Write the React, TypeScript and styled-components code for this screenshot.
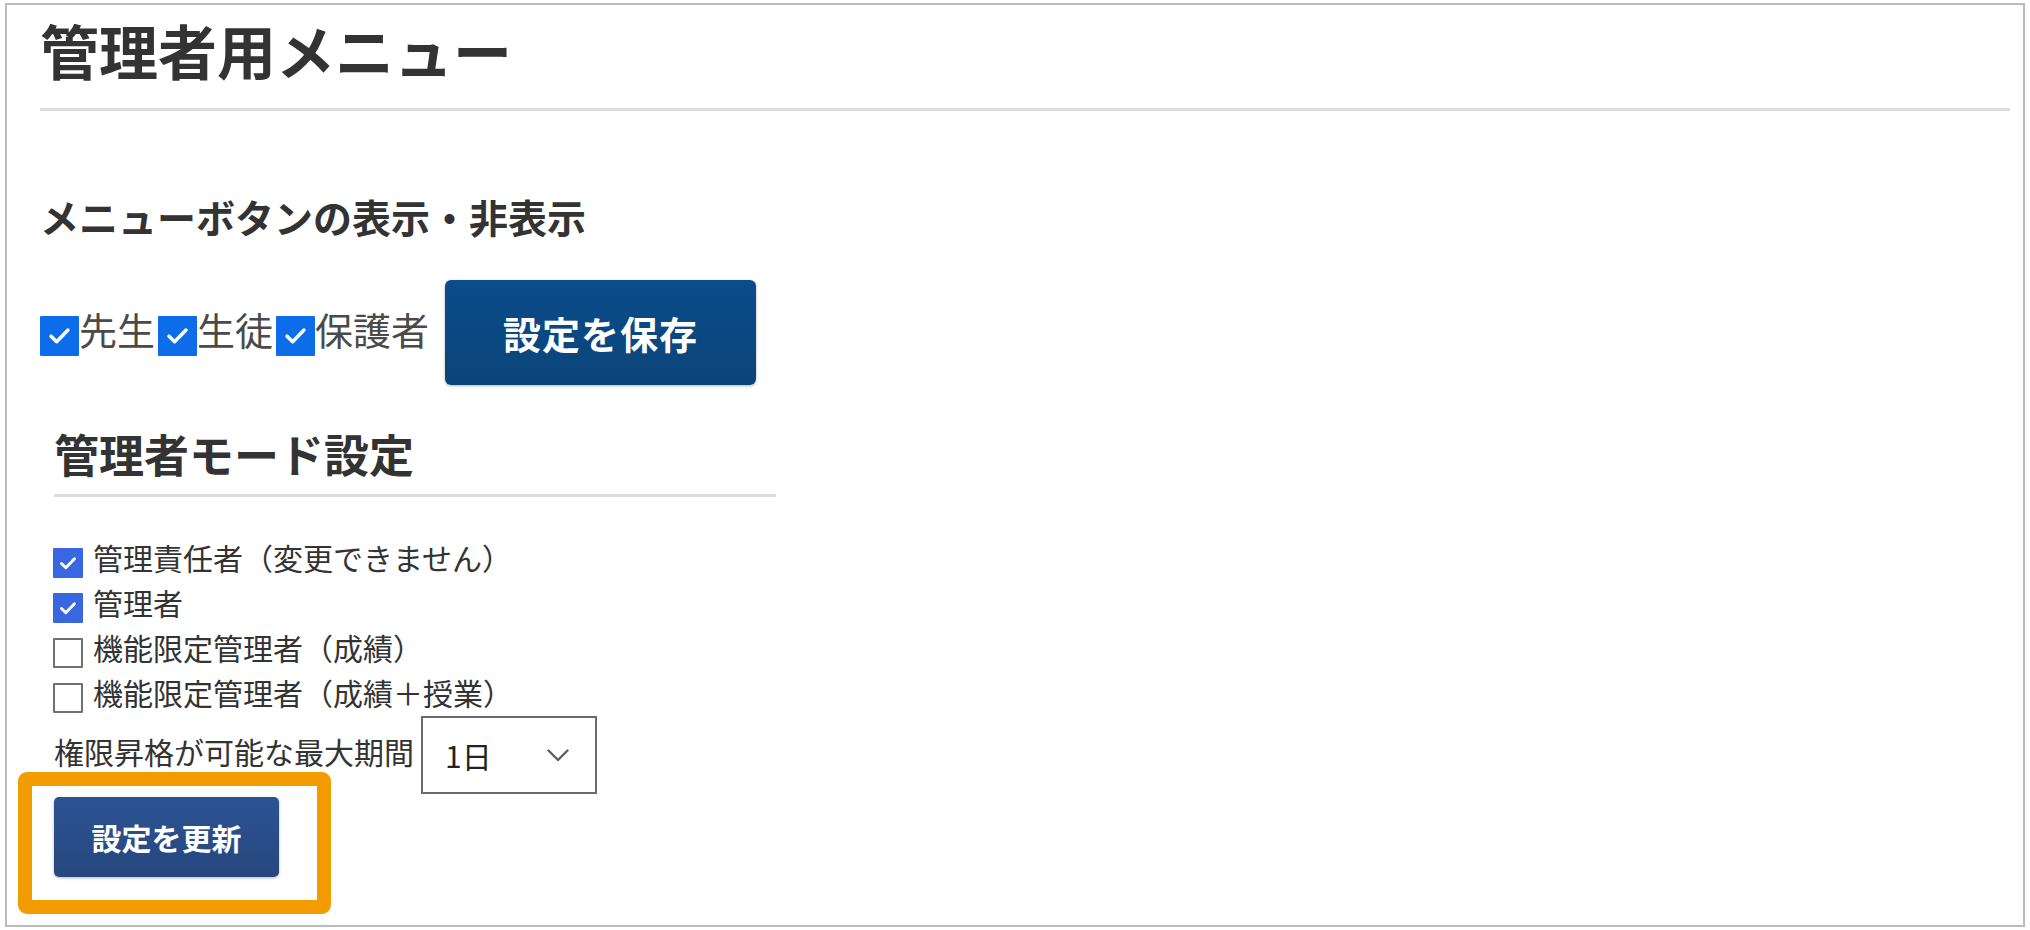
import React from "react";
import styled, { createGlobalStyle } from "styled-components";

const GlobalStyle = createGlobalStyle`
  html, body {
    margin: 0;
    padding: 0;
    background: #ffffff;
  }
  body {
    font-family: "Noto Sans CJK JP", "Noto Sans", sans-serif;
    color: #333333;
  }
`;

const Panel = styled.div`
  box-sizing: border-box;
  margin: 3px 0 0 5px;
  width: 2020px;
  height: 924px;
  border: 2px solid #bbbbbb;
  padding: 10px 13px 0 33px;
  display: flex;
  flex-direction: column;
`;

const PageTitle = styled.h1`
  margin: 0;
  font-size: 59px;
  line-height: 70px;
  font-weight: 700;
  color: #333333;
  padding-bottom: 23px;
  border-bottom: 3px solid #dddddd;
`;

const SectionTitle = styled.h2`
  margin: 82px 0 0 0;
  font-size: 39px;
  line-height: 47px;
  font-weight: 700;
  color: #333333;
`;

const VisibilityRow = styled.div`
  margin-top: 40px;
  display: flex;
  align-items: center;
  gap: 16px;
`;

const CheckGroup = styled.div`
  display: flex;
  align-items: center;
  gap: 3px;
  margin-top: -8px;
`;

const InlineCheck = styled.label`
  display: flex;
  align-items: center;
  font-size: 38px;
  line-height: 46px;
  color: #4a4a4a;
`;

const CheckBox = styled.span<{ $checked: boolean; $size: number; $color: string; $shift: number }>`
  box-sizing: border-box;
  flex: none;
  display: flex;
  align-items: center;
  justify-content: center;
  width: ${(p) => p.$size}px;
  height: ${(p) => p.$size + (p.$size > 35 ? 1 : 0)}px;
  margin-top: ${(p) => p.$shift}px;
  background: ${(p) => (p.$checked ? p.$color : "#ffffff")};
  border: ${(p) => (p.$checked ? "none" : "2px solid #707070")};
  border-radius: 1px;
`;

const SaveButton = styled.button`
  box-sizing: border-box;
  width: 311px;
  height: 105px;
  border: none;
  border-radius: 6px;
  background: linear-gradient(#0b4c8c, #0b4478);
  box-shadow: 0 1px 3px rgba(0, 0, 0, 0.3);
  color: #ffffff;
  font-family: "Noto Sans CJK JP", sans-serif;
  font-size: 38px;
  font-weight: 700;
  letter-spacing: 1px;
  cursor: pointer;
`;

const AdminSection = styled.section`
  margin: 42px 0 0 14px;
  width: 722px;
  display: flex;
  flex-direction: column;
`;

const AdminTitle = styled.h2`
  margin: 0;
  font-size: 45px;
  line-height: 54px;
  font-weight: 700;
  color: #333333;
  padding-bottom: 13px;
  border-bottom: 3px solid #dddddd;
`;

const CheckList = styled.div`
  margin-top: 38px;
  display: flex;
  flex-direction: column;
`;

const ListRow = styled.label`
  display: flex;
  align-items: center;
  gap: 10px;
  height: 45px;
  font-size: 30px;
  line-height: 45px;
  color: #333333;
  margin-left: -1px;
`;

const SelectRow = styled.div`
  display: flex;
  align-items: center;
  gap: 7px;
  height: 78px;
  margin-top: 1px;
`;

const SelectLabel = styled.span`
  font-size: 30px;
  line-height: 45px;
  color: #333333;
  margin-bottom: 8px;
`;

const SelectBox = styled.div`
  box-sizing: border-box;
  width: 176px;
  height: 78px;
  border: 2px solid #666b75;
  background: #ffffff;
  display: flex;
  align-items: center;
  justify-content: space-between;
  padding: 0 26px 0 22px;
  font-size: 30px;
  color: #222222;
`;

const ButtonWrap = styled.div`
  position: relative;
  margin-top: 3px;
  width: 225px;
`;

const UpdateButton = styled.button`
  box-sizing: border-box;
  width: 225px;
  height: 80px;
  border: none;
  border-radius: 5px;
  background: linear-gradient(#2b5393, #27477e);
  box-shadow: 0 1px 3px rgba(0, 0, 0, 0.3);
  color: #ffffff;
  font-family: "Noto Sans CJK JP", sans-serif;
  font-size: 30px;
  font-weight: 700;
  cursor: pointer;
`;

const Highlight = styled.div`
  position: absolute;
  box-sizing: border-box;
  left: -36px;
  top: -25px;
  width: 313px;
  height: 142px;
  border: 14px solid #f29c00;
  border-radius: 9px;
  pointer-events: none;
`;

function Check({
  checked,
  size,
  color,
  shift,
}: {
  checked: boolean;
  size: number;
  color: string;
  shift: number;
}) {
  return (
    <CheckBox $checked={checked} $size={size} $color={color} $shift={shift}>
      {checked && (
        <svg width={size} height={size} viewBox="0 0 30 30">
          <path
            d="M8.5 15.5 L12.8 19.8 L21.5 10.8"
            fill="none"
            stroke="#ffffff"
            strokeWidth={size > 35 ? 2.7 : 2.9}
            strokeLinecap="round"
            strokeLinejoin="round"
          />
        </svg>
      )}
    </CheckBox>
  );
}

function Chevron() {
  return (
    <svg width="22" height="13" viewBox="0 0 22 13">
      <path
        d="M1.5 1.5 L11 11 L20.5 1.5"
        fill="none"
        stroke="#5a5f68"
        strokeWidth="2.4"
        strokeLinecap="round"
        strokeLinejoin="round"
      />
    </svg>
  );
}

const menuRoles = ["先生", "生徒", "保護者"];

const adminModes = [
  { label: "管理責任者（変更できません）", checked: true },
  { label: "管理者", checked: true },
  { label: "機能限定管理者（成績）", checked: false },
  { label: "機能限定管理者（成績＋授業）", checked: false },
];

export default function App() {
  return (
    <>
      <GlobalStyle />
      <Panel>
        <PageTitle>管理者用メニュー</PageTitle>
        <SectionTitle>メニューボタンの表示・非表示</SectionTitle>
        <VisibilityRow>
          <CheckGroup>
            {menuRoles.map((r) => (
              <InlineCheck key={r}>
                <Check checked size={39} color="#0c6ce9" shift={14} />
                {r}
              </InlineCheck>
            ))}
          </CheckGroup>
          <SaveButton>設定を保存</SaveButton>
        </VisibilityRow>
        <AdminSection>
          <AdminTitle>管理者モード設定</AdminTitle>
          <CheckList>
            {adminModes.map((m) => (
              <ListRow key={m.label}>
                <Check checked={m.checked} size={30} color="#3966e1" shift={10} />
                {m.label}
              </ListRow>
            ))}
            <SelectRow>
              <SelectLabel>権限昇格が可能な最大期間</SelectLabel>
              <SelectBox>
                <span>1日</span>
                <Chevron />
              </SelectBox>
            </SelectRow>
          </CheckList>
          <ButtonWrap>
            <UpdateButton>設定を更新</UpdateButton>
            <Highlight />
          </ButtonWrap>
        </AdminSection>
      </Panel>
    </>
  );
}
